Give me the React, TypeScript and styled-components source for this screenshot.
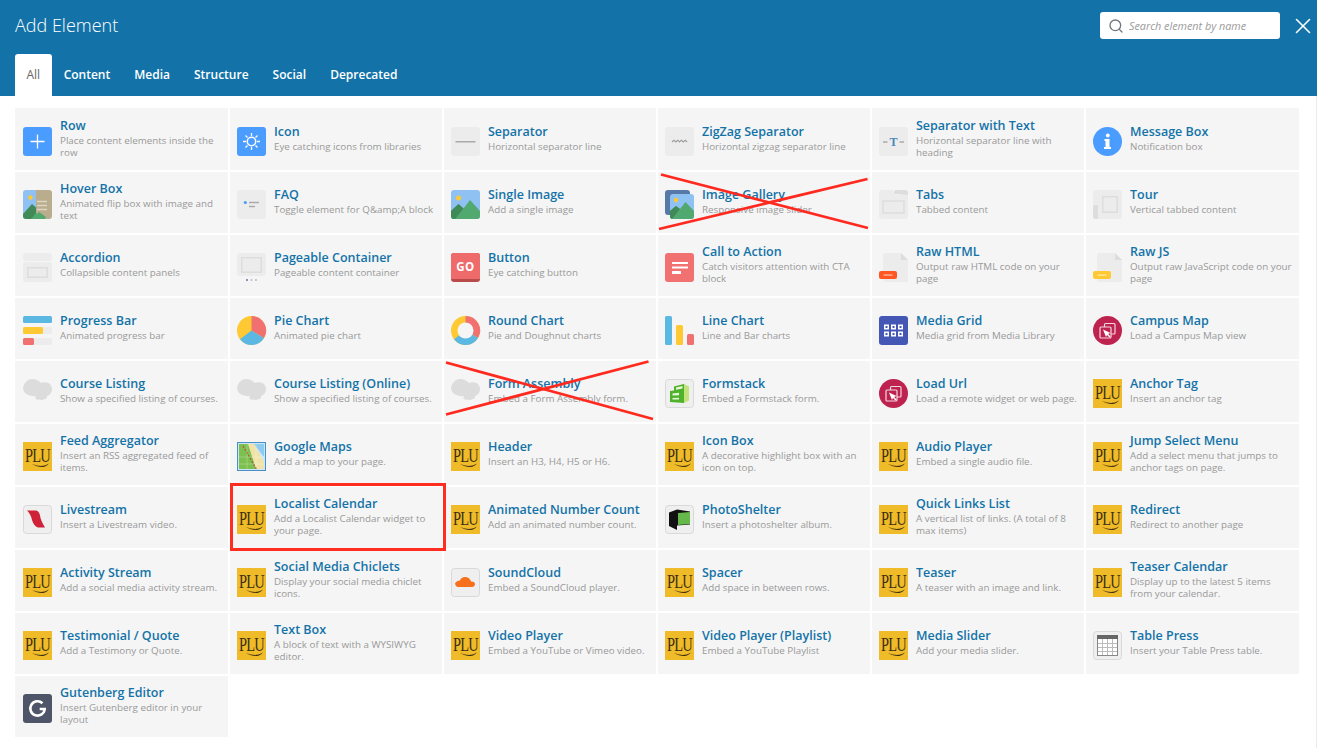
import React from 'react'
import styled, { createGlobalStyle } from 'styled-components'
import { Search, X } from 'lucide-react'

type IconName =
    | 'plus' | 'sun' | 'separator' | 'zigzag' | 'sepText' | 'info' | 'hover' | 'faq' | 'image'
    | 'gallery' | 'tabs' | 'tour' | 'accordion' | 'pageable' | 'go' | 'cta' | 'html' | 'js'
    | 'progress' | 'pie' | 'round' | 'line' | 'grid' | 'campus' | 'cloud' | 'formstack'
    | 'maps' | 'plu' | 'livestream' | 'soundcloud' | 'photoshelter' | 'table' | 'gutenberg'

type Element = {
    title: string
    text: string
    icon: IconName
    strike?: 'gallery' | 'form'
    marked?: boolean
}

const elements: Element[] = [
    { title: 'Row', text: 'Place content elements inside the row', icon: 'plus' },
    { title: 'Icon', text: 'Eye catching icons from libraries', icon: 'sun' },
    { title: 'Separator', text: 'Horizontal separator line', icon: 'separator' },
    { title: 'ZigZag Separator', text: 'Horizontal zigzag separator line', icon: 'zigzag' },
    { title: 'Separator with Text', text: 'Horizontal separator line with heading', icon: 'sepText' },
    { title: 'Message Box', text: 'Notification box', icon: 'info' },
    { title: 'Hover Box', text: 'Animated flip box with image and text', icon: 'hover' },
    { title: 'FAQ', text: 'Toggle element for Q&amp;A block', icon: 'faq' },
    { title: 'Single Image', text: 'Add a single image', icon: 'image' },
    { title: 'Image Gallery', text: 'Responsive image slider', icon: 'gallery', strike: 'gallery' },
    { title: 'Tabs', text: 'Tabbed content', icon: 'tabs' },
    { title: 'Tour', text: 'Vertical tabbed content', icon: 'tour' },
    { title: 'Accordion', text: 'Collapsible content panels', icon: 'accordion' },
    { title: 'Pageable Container', text: 'Pageable content container', icon: 'pageable' },
    { title: 'Button', text: 'Eye catching button', icon: 'go' },
    { title: 'Call to Action', text: 'Catch visitors attention with CTA block', icon: 'cta' },
    { title: 'Raw HTML', text: 'Output raw HTML code on your page', icon: 'html' },
    { title: 'Raw JS', text: 'Output raw JavaScript code on your page', icon: 'js' },
    { title: 'Progress Bar', text: 'Animated progress bar', icon: 'progress' },
    { title: 'Pie Chart', text: 'Animated pie chart', icon: 'pie' },
    { title: 'Round Chart', text: 'Pie and Doughnut charts', icon: 'round' },
    { title: 'Line Chart', text: 'Line and Bar charts', icon: 'line' },
    { title: 'Media Grid', text: 'Media grid from Media Library', icon: 'grid' },
    { title: 'Campus Map', text: 'Load a Campus Map view', icon: 'campus' },
    { title: 'Course Listing', text: 'Show a specified listing of courses.', icon: 'cloud' },
    { title: 'Course Listing (Online)', text: 'Show a specified listing of courses.', icon: 'cloud' },
    { title: 'Form Assembly', text: 'Embed a Form Assembly form.', icon: 'cloud', strike: 'form' },
    { title: 'Formstack', text: 'Embed a Formstack form.', icon: 'formstack' },
    { title: 'Load Url', text: 'Load a remote widget or web page.', icon: 'campus' },
    { title: 'Anchor Tag', text: 'Insert an anchor tag', icon: 'plu' },
    { title: 'Feed Aggregator', text: 'Insert an RSS aggregated feed of items.', icon: 'plu' },
    { title: 'Google Maps', text: 'Add a map to your page.', icon: 'maps' },
    { title: 'Header', text: 'Insert an H3, H4, H5 or H6.', icon: 'plu' },
    { title: 'Icon Box', text: 'A decorative highlight box with an icon on top.', icon: 'plu' },
    { title: 'Audio Player', text: 'Embed a single audio file.', icon: 'plu' },
    { title: 'Jump Select Menu', text: 'Add a select menu that jumps to anchor tags on page.', icon: 'plu' },
    { title: 'Livestream', text: 'Insert a Livestream video.', icon: 'livestream' },
    { title: 'Localist Calendar', text: 'Add a Localist Calendar widget to your page.', icon: 'plu', marked: true },
    { title: 'Animated Number Count', text: 'Add an animated number count.', icon: 'plu' },
    { title: 'PhotoShelter', text: 'Insert a photoshelter album.', icon: 'photoshelter' },
    { title: 'Quick Links List', text: 'A vertical list of links. (A total of 8 max items)', icon: 'plu' },
    { title: 'Redirect', text: 'Redirect to another page', icon: 'plu' },
    { title: 'Activity Stream', text: 'Add a social media activity stream.', icon: 'plu' },
    { title: 'Social Media Chiclets', text: 'Display your social media chiclet icons.', icon: 'plu' },
    { title: 'SoundCloud', text: 'Embed a SoundCloud player.', icon: 'soundcloud' },
    { title: 'Spacer', text: 'Add space in between rows.', icon: 'plu' },
    { title: 'Teaser', text: 'A teaser with an image and link.', icon: 'plu' },
    { title: 'Teaser Calendar', text: 'Display up to the latest 5 items from your calendar.', icon: 'plu' },
    { title: 'Testimonial / Quote', text: 'Add a Testimony or Quote.', icon: 'plu' },
    { title: 'Text Box', text: 'A block of text with a WYSIWYG editor.', icon: 'plu' },
    { title: 'Video Player', text: 'Embed a YouTube or Vimeo video.', icon: 'plu' },
    { title: 'Video Player (Playlist)', text: 'Embed a YouTube Playlist', icon: 'plu' },
    { title: 'Media Slider', text: 'Add your media slider.', icon: 'plu' },
    { title: 'Table Press', text: 'Insert your Table Press table.', icon: 'table' },
    { title: 'Gutenberg Editor', text: 'Insert Gutenberg editor in your layout', icon: 'gutenberg' },
]

const tabs = ['All', 'Content', 'Media', 'Structure', 'Social', 'Deprecated']

const drawings: Record<Exclude<IconName, 'plu'>, React.ReactNode> = {
    plus: (
        <>
            <rect width="29" height="29" rx="3" fill="#4a9cff" />
            <path d="M14.5 7.5v14M7.5 14.5h14" stroke="#fff" strokeWidth="1.3" />
        </>
    ),
    sun: (
        <>
            <rect width="29" height="29" rx="3" fill="#4a9cff" />
            <circle cx="14.5" cy="14.5" r="4.2" fill="none" stroke="#fff" strokeWidth="1.5" />
            <path d="M14.5 6v3M14.5 20v3M6 14.5h3M20 14.5h3M8.5 8.5l2 2M18.5 18.5l2 2M20.5 8.5l-2 2M10.5 18.5l-2 2" stroke="#fff" strokeWidth="1.3" />
        </>
    ),
    separator: (
        <>
            <rect width="29" height="29" rx="3" fill="#ececec" />
            <rect x="4.5" y="14" width="20" height="1.5" fill="#aaa" />
        </>
    ),
    zigzag: (
        <>
            <rect width="29" height="29" rx="3" fill="#ececec" />
            <path d="M7 15l1.9-1.8 1.9 1.8 1.9-1.8 1.8 1.8 1.9-1.8 1.9 1.8 1.9-1.8 1.9 1.8" fill="none" stroke="#999" strokeWidth="1.1" />
        </>
    ),
    sepText: (
        <>
            <rect width="29" height="29" rx="3" fill="#ececec" />
            <path d="M4 15h4.5M20.5 15H25" stroke="#aaa" strokeWidth="1.4" />
            <text x="14.5" y="19" textAnchor="middle" fontFamily="'Liberation Serif', serif" fontWeight="700" fontSize="12" fill="#4c86bd">T</text>
        </>
    ),
    info: (
        <>
            <circle cx="14.5" cy="14.5" r="14.5" fill="#4a9cff" />
            <circle cx="14.8" cy="8.5" r="1.9" fill="#fff" />
            <path d="M11.5 12h5v8H18v2h-7v-2h1.5v-6h-1z" fill="#fff" />
        </>
    ),
    hover: (
        <>
            <path d="M3 0h10v29H3a3 3 0 0 1-3-3V3a3 3 0 0 1 3-3z" fill="#8fc1f2" />
            <path d="M13 0h13a3 3 0 0 1 3 3v23a3 3 0 0 1-3 3H13z" fill="#b9ad8d" />
            <circle cx="7.5" cy="7.5" r="2.3" fill="#ffc933" />
            <path d="M0 24l9-10 4 3.5V29H3a3 3 0 0 1-3-3z" fill="#3f8a58" />
            <path d="M8 29l5-6 8 6z" fill="#52a96f" />
            <path d="M13 25l3-3 7 5-1 2H13z" fill="#52a96f" />
            <path d="M14 11.5h10M14 15.5h10M14 19.5h10" stroke="#ddd6c2" strokeWidth="1.5" />
        </>
    ),
    faq: (
        <>
            <rect width="29" height="29" rx="3" fill="#ececec" />
            <circle cx="8.3" cy="12.5" r="1.6" fill="#4a9cff" />
            <path d="M12 12.5h10M12 16.5h6" stroke="#aaa" strokeWidth="1.5" />
        </>
    ),
    image: (
        <>
            <rect width="29" height="29" rx="3" fill="#8fc1f2" />
            <circle cx="7.5" cy="8" r="2.5" fill="#ffc933" />
            <path d="M0 26v-5l7.5-7 5 4.5L19 10l10 11v5a3 3 0 0 1-3 3H3a3 3 0 0 1-3-3z" fill="#52a96f" />
            <path d="M0 26v-5l7.5-7 5 4.5L4 29H3a3 3 0 0 1-3-3z" fill="#3f8a58" />
        </>
    ),
    gallery: (
        <>
            <rect width="25" height="25" rx="3" fill="#5679a8" />
            <rect x="5" y="4" width="24" height="25" rx="3" fill="#8fc1f2" />
            <circle cx="11" cy="10" r="2.2" fill="#ffc933" />
            <path d="M5 26v-5l6-5 4 3 5.5-7 8.5 9v5a3 3 0 0 1-3 3H8a3 3 0 0 1-3-3z" fill="#52a96f" />
            <path d="M5 26v-5l6-5 4 3-8 10a3 3 0 0 1-2-3z" fill="#3f8a58" />
        </>
    ),
    tabs: (
        <>
            <path d="M3 0h11l1 5h14v21a3 3 0 0 1-3 3H3a3 3 0 0 1-3-3V3a3 3 0 0 1 3-3z" fill="#ececec" />
            <path d="M15 4V2a2 2 0 0 1 2-2h9a3 3 0 0 1 3 3v2z" fill="#ddd" />
            <rect x="4" y="11" width="21" height="12" fill="none" stroke="#ddd" strokeWidth="1.5" />
        </>
    ),
    tour: (
        <>
            <rect width="29" height="29" rx="3" fill="#ececec" />
            <rect x="9.75" y="6.75" width="14.5" height="15.5" fill="none" stroke="#ddd" strokeWidth="1.5" />
            <path d="M2 15h3v14H3a3 3 0 0 1-3-3V17a2 2 0 0 1 2-2z" fill="#ddd" />
        </>
    ),
    accordion: (
        <>
            <rect width="29" height="8" rx="3" fill="#ececec" />
            <rect y="9" width="29" height="20" rx="2" fill="#ececec" />
            <rect x="4.75" y="14.75" width="19.5" height="9.5" fill="none" stroke="#ddd" strokeWidth="1.5" />
        </>
    ),
    pageable: (
        <>
            <rect width="29" height="23" rx="3" fill="#ececec" />
            <rect x="4.75" y="4.75" width="19.5" height="14.5" fill="none" stroke="#ddd" strokeWidth="1.5" />
            <circle cx="10" cy="27" r="1" fill="#5679a8" />
            <circle cx="14.5" cy="27" r="1" fill="#bbb" />
            <circle cx="19" cy="27" r="1" fill="#bbb" />
        </>
    ),
    go: (
        <>
            <rect width="29" height="29" rx="3" fill="#b94a4a" />
            <path d="M3 0h23a3 3 0 0 1 3 3v23H0V3a3 3 0 0 1 3-3z" fill="#ef6b6b" />
            <text x="14.5" y="18" textAnchor="middle" fontFamily="'Open Sans', sans-serif" fontWeight="700" fontSize="11.5" letterSpacing=".4" fill="#fff">GO</text>
        </>
    ),
    cta: (
        <>
            <rect width="29" height="29" rx="3" fill="#f17070" />
            <path d="M7 9h16v2H7zM7 13.5h16v2H7z" fill="#fff" />
            <rect x="7" y="18" width="9" height="3" rx=".5" fill="#fff" />
        </>
    ),
    html: (
        <>
            <path d="M6 0h16l7 7v22H6a2 2 0 0 1-2-2V2a2 2 0 0 1 2-2z" fill="#ececec" />
            <path d="M22 0l7 7h-7z" fill="#ddd" />
            <rect y="18" width="18" height="8" rx="2" fill="#ff5722" />
            <rect x="4.5" y="21.3" width="9" height="1.5" fill="#ffab91" />
        </>
    ),
    js: (
        <>
            <path d="M6 0h16l7 7v22H6a2 2 0 0 1-2-2V2a2 2 0 0 1 2-2z" fill="#ececec" />
            <path d="M22 0l7 7h-7z" fill="#ddd" />
            <rect y="18" width="18" height="8" rx="2" fill="#ffc933" />
            <rect x="4.5" y="21.3" width="9" height="1.5" fill="#ffe58f" />
        </>
    ),
    progress: (
        <>
            <rect width="29" height="7" rx="1.5" fill="#5bb8e2" />
            <rect y="11" width="29" height="7" rx="1.5" fill="#ececec" />
            <rect y="11" width="20" height="7" rx="1.5" fill="#ffc933" />
            <rect y="22" width="29" height="7" rx="1.5" fill="#ececec" />
            <rect y="22" width="11" height="7" rx="1.5" fill="#f17070" />
        </>
    ),
    pie: (
        <>
            <circle cx="14.5" cy="14.5" r="14.5" fill="#ffc933" />
            <path d="M14.5 14.5V0A14.5 14.5 0 0 1 27 22z" fill="#f17070" />
            <path d="M14.5 14.5L27 22A14.5 14.5 0 0 1 3 23.3z" fill="#5bb8e2" />
        </>
    ),
    round: (
        <>
            <circle cx="14.5" cy="14.5" r="14.5" fill="#ffc933" />
            <path d="M14.5 14.5V0A14.5 14.5 0 0 1 27 22z" fill="#f17070" />
            <path d="M14.5 14.5L27 22A14.5 14.5 0 0 1 3 23.3z" fill="#5bb8e2" />
            <circle cx="14.5" cy="14.5" r="8" fill="#f5f5f5" />
        </>
    ),
    line: (
        <>
            <rect width="7" height="29" rx="1.5" fill="#5bb8e2" />
            <rect x="11" y="9" width="7" height="20" rx="1.5" fill="#ffc933" />
            <rect x="22" y="18" width="7" height="11" rx="1.5" fill="#f17070" />
        </>
    ),
    grid: (
        <>
            <rect width="29" height="29" rx="3" fill="#4557b5" />
            <path d="M5 8.5h5v5H5zM12 8.5h5v5h-5zM19 8.5h5v5h-5zM5 15.5h5v5H5zM12 15.5h5v5h-5zM19 15.5h5v5h-5z" fill="#fff" />
            <path d="M6.5 10h2v2h-2zM13.5 10h2v2h-2zM20.5 10h2v2h-2zM6.5 17h2v2h-2zM13.5 17h2v2h-2zM20.5 17h2v2h-2z" fill="#4557b5" />
        </>
    ),
    campus: (
        <>
            <circle cx="14.5" cy="14.5" r="14.5" fill="#be2350" />
            <rect x="11.5" y="7.5" width="10.5" height="10.5" rx="1" fill="none" stroke="#f4d6df" strokeWidth="1.2" />
            <rect x="7" y="11" width="11" height="11" rx="1" fill="#be2350" stroke="#f4d6df" strokeWidth="1.2" />
            <path d="M10 13.5l7.5 3.5-2.3 1 2.3 2.5-1 1-2.5-2.5-1 2z" fill="#fff" />
        </>
    ),
    cloud: (
        <path d="M9 0c4 0 7 2 9 4 1.5-.8 3-1 4.5-.8C26.5 3.500 29 6.500 29 10c0 3.500-2 6-5 7 .3 1.700-.5 3-2.500 3-1.500 1-3.500 1.200-5 .4-1.500.5-3 .3-4-.9-.3-1.200 0-2 .5-2.500-1.500.2-3.500.3-5-.3C5 16 1 14 .3 11-.7 6 3.500 0 9 0z" fill="#dcdcdc" />
    ),
    formstack: (
        <>
            <rect x=".5" y=".5" width="28" height="28" rx="3" fill="#efefef" stroke="#d9d9d9" />
            <path d="M19 5l5 2.500v14L19 24z" fill="#c4e27c" />
            <path d="M9 7.500L19 5v19l-14-1V12l4-.5z" fill="#4fb22b" />
            <path d="M11 8.500l6.500-1.500v2.500L11 10.700zM7.500 14.500l6.500-.7v2.400l-6.500.4zM7.500 19l6.500-.2v1.800l-6.500-.2z" fill="#e8f6df" />
        </>
    ),
    maps: (
        <>
            <rect x=".5" y=".5" width="28" height="28" fill="#cde6f7" stroke="#4a90c8" />
            <path d="M2 2h12l8 25H2z" fill="#7cc04f" />
            <path d="M11 2h6l10 18v7h-8z" fill="#f1e3a8" />
            <path d="M17 2h10v13z" fill="#8ecbee" />
            <path d="M6 4l14 24" stroke="#b5533c" strokeWidth="1.2" strokeDasharray="2 1.5" />
            <path d="M2 15h25M2 22h25M10 2v25M19 2v25" stroke="#fff" strokeWidth=".5" opacity=".5" />
        </>
    ),
    livestream: (
        <>
            <rect x=".5" y=".5" width="28" height="28" rx="3" fill="#efefef" stroke="#d9d9d9" />
            <path d="M4 5.500h9c2 .5 3.500 2 4 5 .5 3.500 2 7 5 12h-7c-3-1-5-4-6-7.500C8.500 11.500 6.500 8 4 5.500z" fill="#cf2138" />
        </>
    ),
    soundcloud: (
        <>
            <rect x=".5" y=".5" width="28" height="28" rx="3" fill="#efefef" stroke="#d9d9d9" />
            <path d="M4 15.500c1-2 3-3 5-3 .5-2 2.500-3.500 5-3.500 3 0 5.500 2 6 4.500 2.500-.5 4 1 4 2.500s-1 3-3 3H7c-1.500 0-2.500-1.500-3-3.500z" fill="#f7701d" />
        </>
    ),
    photoshelter: (
        <>
            <rect x=".5" y=".5" width="28" height="28" rx="3" fill="#efefef" stroke="#d9d9d9" />
            <path d="M4 7.500l8-3 13 2v13l-13 1v4.500L4 21z" fill="#111" />
            <path d="M13 8l12-1v12l-12 1z" fill="#66b84a" />
        </>
    ),
    table: (
        <>
            <rect x=".5" y=".5" width="28" height="28" rx="3" fill="#efefef" stroke="#d9d9d9" />
            <rect x="4.5" y="4.5" width="20" height="20" fill="#fff" stroke="#888" />
            <rect x="4" y="4" width="21" height="4" fill="#666" />
            <path d="M5 12.5h19M5 16.5h19M5 20.5h19M9.5 8v16M14.5 8v16M19.5 8v16" stroke="#bbb" strokeWidth="1" />
        </>
    ),
    gutenberg: (
        <>
            <rect width="29" height="29" rx="3" fill="#4f5568" />
            <path d="M19.5 9.200a7.200 7.200 0 1 0 2.200 5.800h-5" fill="none" stroke="#fff" strokeWidth="2.600" />
        </>
    ),
}

const ElementIcon: React.FC<{ name: IconName }> = ({ name }) => {
    if (name === 'plu') {
        return (
            <PluMark>
                <PluText>PLU</PluText>
                <PluSwoosh viewBox="0 0 29 6">
                    <path d="M9 2c4 1.500 8 2.200 11 1.800 2-.3 4-1 6-2.300-2 2.500-4 3.300-6.500 3.400-3.500.1-7-1-10.500-2.900z" fill="#3c2e12" />
                </PluSwoosh>
            </PluMark>
        )
    }
    return <IconArt viewBox="0 0 29 29">{drawings[name]}</IconArt>
}

const Strike: React.FC<{ lines: number[][] }> = ({ lines }) => (
    <StrikeArt>
        {lines.map(([x1, y1, x2, y2]) => (
            <line key={x1 + '-' + y1} x1={x1} y1={y1} x2={x2} y2={y2} stroke="#ff2a1f" strokeWidth="2.800" />
        ))}
    </StrikeArt>
)

const strikes = {
    gallery: [
        [4, 3.5, 211, 57],
        [2, 58, 210.5, 8],
    ],
    form: [
        [3, 2.5, 210, 59],
        [3, 54.5, 205.5, 1.5],
    ],
}

const App: React.FC = () => {
    return (
        <>
            <GlobalStyle />
            <Page>
                <Header>
                    <TopRow>
                        <Title>Add Element</Title>
                        <SearchBox>
                            <Search size={16} color="#70767d" strokeWidth={2} />
                            <SearchInput placeholder="Search element by name" />
                        </SearchBox>
                        <CloseButton>
                            <X size={26} color="#fff" strokeWidth={1.5} />
                        </CloseButton>
                    </TopRow>
                    <TabBar>
                        {tabs.map((tab, i) => (
                            <Tab key={tab} $active={i === 0}>
                                {tab}
                            </Tab>
                        ))}
                    </TabBar>
                </Header>
                <Body>
                    <Grid>
                        {elements.map((el) => (
                            <Cell key={el.title}>
                                <ElementIcon name={el.icon} />
                                <CellText>
                                    <CellTitle>{el.title}</CellTitle>
                                    <CellDesc>{el.text}</CellDesc>
                                </CellText>
                                {el.strike && <Strike lines={strikes[el.strike]} />}
                                {el.marked && <Marker />}
                            </Cell>
                        ))}
                    </Grid>
                </Body>
            </Page>
        </>
    )
}

export default App

const GlobalStyle = createGlobalStyle`
    html, body {
        margin: 0;
        padding: 0;
        background: #fff;
    }
    * {
        box-sizing: border-box;
    }
    input::placeholder {
        color: #9a9a9a;
        opacity: 1;
    }
`

const Page = styled.div`
    width: 1317px;
    height: 748px;
    overflow: hidden;
    font-family: 'Open Sans', 'Liberation Sans', sans-serif;
`

const Header = styled.header`
    height: 96px;
    background: #1373a8;
    display: flex;
    flex-direction: column;
    justify-content: space-between;
`

const TopRow = styled.div`
    display: flex;
    align-items: center;
    padding: 12px 0 0 15px;
`

const Title = styled.h1`
    margin: 0;
    flex: 1;
    font-size: 18px;
    font-weight: 300;
    line-height: 27px;
    color: #fff;
`

const SearchBox = styled.div`
    width: 180px;
    height: 27px;
    background: #fff;
    border-radius: 3px;
    display: flex;
    align-items: center;
    gap: 5px;
    padding: 0 7px 0 8px;
`

const SearchInput = styled.input`
    flex: 1;
    min-width: 0;
    border: 0;
    padding: 0;
    outline: none;
    background: none;
    font-family: inherit;
    font-size: 10.8px;
    font-style: italic;
`

const CloseButton = styled.div`
    width: 37px;
    height: 27px;
    padding-left: 8px;
    display: flex;
    align-items: center;
    justify-content: center;
`

const TabBar = styled.nav`
    display: flex;
    padding-left: 15px;
`

const Tab = styled.div<{ $active?: boolean }>`
    height: 42px;
    padding: 0 ${(p) => (p.$active ? '11.5px' : '12px')} 2px;
    display: flex;
    align-items: center;
    font-size: 12px;
    font-weight: ${(p) => (p.$active ? 400 : 600)};
    color: ${(p) => (p.$active ? '#666' : '#fff')};
    background: ${(p) => (p.$active ? '#fff' : 'transparent')};
    border-radius: 3px 3px 0 0;
`

const Body = styled.main`
    height: 652px;
    padding: 12px 17px 0 15px;
    border-right: 1px solid #ececec;
`

const Grid = styled.div`
    display: grid;
    grid-template-columns: repeat(6, 214px);
    grid-auto-rows: 63px;
    width: 1284px;
`

const Cell = styled.div`
    --l: 1px;
    --r: 1px;
    --t: 1px;
    position: relative;
    display: flex;
    align-items: center;
    gap: 8px;
    padding: 0 4px 0 8px;
    background: #f5f5f5;
    box-shadow:
        inset var(--l) 0 #fff,
        inset calc(-1 * var(--r)) 0 #fff,
        inset 0 var(--t) #fff,
        inset 0 -1px #fff;
    &:nth-child(6n + 1) {
        --l: 0px;
    }
    &:nth-child(6n) {
        --r: 0px;
    }
    &:nth-child(-n + 6) {
        --t: 0px;
    }
`

const IconArt = styled.svg`
    flex: none;
    width: 29px;
    height: 29px;
    margin-top: 4px;
    overflow: visible;
`

const PluMark = styled.div`
    flex: none;
    position: relative;
    width: 29px;
    height: 29px;
    margin-top: 4px;
    background: #f0bb29;
    display: flex;
    justify-content: center;
    overflow: hidden;
`

const PluText = styled.span`
    font-family: 'Liberation Serif', serif;
    font-size: 19px;
    line-height: 27px;
    letter-spacing: -1px;
    color: #3c2e12;
    transform: scaleX(0.76);
`

const PluSwoosh = styled.svg`
    position: absolute;
    left: 0;
    bottom: 3px;
    width: 29px;
    height: 6px;
`

const CellText = styled.div`
    min-width: 0;
    margin-bottom: 4px;
`

const CellTitle = styled.div`
    font-size: 12.5px;
    font-weight: 600;
    line-height: 17px;
    margin-bottom: 1px;
    color: #1373a8;
`

const CellDesc = styled.div`
    font-size: 9.8px;
    line-height: 12px;
    color: #999;
`

const StrikeArt = styled.svg`
    position: absolute;
    z-index: 2;
    inset: 0;
    width: 100%;
    height: 100%;
    overflow: visible;
    pointer-events: none;
`

const Marker = styled.div`
    position: absolute;
    z-index: 2;
    top: -3px;
    left: 1px;
    width: 216px;
    height: 68px;
    border: 3px solid #ff2d20;
    pointer-events: none;
`
